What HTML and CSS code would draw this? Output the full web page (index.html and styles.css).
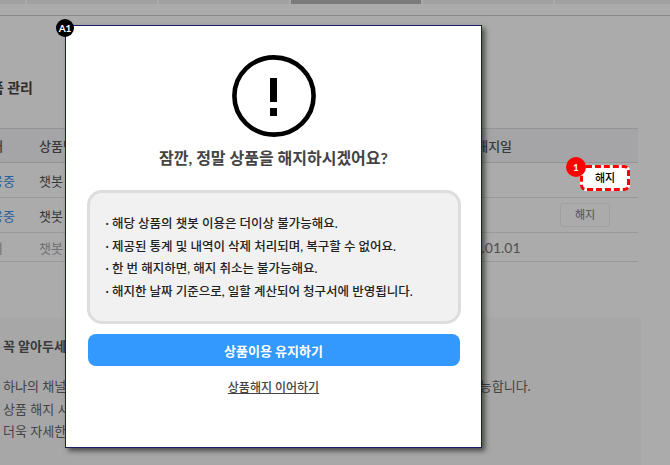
FILE: index.html
```html
<!DOCTYPE html>
<html lang="ko">
<head>
  <meta charset="UTF-8" />
  <meta name="viewport" content="width=device-width, initial-scale=1.0"/>
  <title>상품 해지</title>
  <link rel="stylesheet" href="styles.css">
</head>
<body>

<div class="tabs">
  <span class="tab tab-first"></span>
  <span class="tab"></span>
  <span class="tab"></span>
  <span class="tab tab-active"></span>
  <span class="tab"></span>
  <span class="tab tab-last"></span>
</div>

<main class="page">
  <h2 class="page-title">상품 관리</h2>

  <table class="product-table">
    <tr>
      <th class="col-state">상태</th>
      <th class="col-name">상품명</th>
      <th class="col-date">상품 해지일</th>
      <th class="col-btn"></th>
    </tr>
    <tr>
      <td class="state-on">이용중</td>
      <td>챗봇 상품</td>
      <td>-</td>
      <td class="col-btn"><span class="btn-cancel btn-hidden">해지</span></td>
    </tr>
    <tr>
      <td class="state-on">이용중</td>
      <td>챗봇 상품</td>
      <td>-</td>
      <td class="col-btn"><span class="btn-cancel">해지</span></td>
    </tr>
    <tr class="row-off">
      <td>해지</td>
      <td>챗봇 상품</td>
      <td>2022.01.01</td>
      <td></td>
    </tr>
  </table>

  <section class="notice">
    <h3>꼭 알아두세요!</h3>
    <p>하나의 채널에는 하나의 상품만 이용할 수 있으며, 이용 중인 상품을 해지한 후 재구매가 가능합니다.</p>
    <p>상품 해지 시 해지한 날짜 기준으로 요금이 계산됩니다.</p>
    <p>더욱 자세한 내용은 고객센터로 문의해 주세요.</p>
  </section>
</main>

<div class="overlay"></div>

<!-- highlighted button sits above the dim layer -->
<div class="highlight">
  <span class="step-badge">1</span>
  <span class="highlight-btn">해지</span>
</div>

<div class="modal">
  <span class="modal-badge">A1</span>
  <svg class="alert-icon" width="84" height="82" viewBox="0 0 84 82">
    <ellipse cx="42" cy="41" rx="39.6" ry="38.6" fill="none" stroke="#000" stroke-width="4.6"/>
    <rect x="38" y="23" width="7" height="24" fill="#000"/>
    <rect x="38" y="53" width="7" height="8" fill="#000"/>
  </svg>
  <h2 class="modal-title">잠깐, 정말 상품을 해지하시겠어요?</h2>
  <ul class="warn-box">
    <li>· 해당 상품의 챗봇 이용은 더이상 불가능해요.</li>
    <li>· 제공된 통계 및 내역이 삭제 처리되며, 복구할 수 없어요.</li>
    <li>· 한 번 해지하면, 해지 취소는 불가능해요.</li>
    <li>· 해지한 날짜 기준으로, 일할 계산되어 청구서에 반영됩니다.</li>
  </ul>
  <button class="keep-btn">상품이용 유지하기</button>
  <a class="cancel-link" href="#">상품해지 이어하기</a>
</div>

</body>
</html>
```

FILE: styles.css
```css
* {
  box-sizing: border-box;
}

html, body {
  height: 100%;
}

body {
  margin: 0;
  width: 670px;
  height: 465px;
  overflow: hidden;
  position: relative;
  font-family: Lato, "Noto Sans CJK KR", sans-serif;
  background: #fff;
  color: #333;
}

.tabs {
  display: flex;
  gap: 2px;
  height: 16px;
  padding-bottom: 11px;
  border-bottom: 1px solid #ccc;
}

.tab {
  width: 130px;
  background: #f0f0f0;
}

.tab-first {
  width: 25px;
}

.tab-last {
  flex: 1;
}

.tab-active {
  background: #b8b8b8;
}

.page {
  width: 664px;
  margin-left: -22px;
}

.page-title {
  margin: 62px 0 0;
  height: 50px;
  font-size: 14px;
  line-height: 20px;
  font-weight: 700;
  color: #444;
}

.product-table {
  width: 660px;
  height: 134px;
  border-collapse: collapse;
  font-size: 13px;
  color: #555;
}

.product-table th {
  height: 34px;
  background: #f7f7f9;
  border-top: 1px solid #ddd;
  border-bottom: 1px solid #ddd;
  font-weight: 500;
  text-align: left;
  color: #555;
}

.product-table td {
  border-bottom: 1px solid #e4e4e4;
}

.col-state {
  width: 60px;
}

.col-name {
  width: 410px;
}

.col-date {
  width: 110px;
}

.col-btn {
  width: 80px;
}

.state-on {
  color: #3b8fe8;
}

.row-off td {
  color: #aaa;
}

.row-off td:nth-child(3) {
  color: #777;
  font-size: 14px;
}

.btn-cancel {
  display: block;
  width: 50px;
  height: 24px;
  margin-left: 1px;
  font-size: 11px;
  line-height: 22px;
  text-align: center;
  border: 1px solid #eee;
  border-radius: 3px;
  color: #777;
}

.btn-hidden {
  visibility: hidden;
}

.notice {
  width: 663px;
  height: 150px;
  margin-top: 55px;
  padding: 18px 0 0 25px;
  background: #f9f9fb;
  font-size: 13px;
  color: #666;
}

.notice h3 {
  margin: 0 0 18px;
  font-size: 13px;
  line-height: 22px;
  font-weight: 700;
  color: #555;
}

.notice p {
  margin: 0;
  line-height: 22.5px;
}

.overlay {
  position: absolute;
  inset: 0;
  background: rgba(0, 0, 0, 0.33);
}

.highlight {
  position: absolute;
  left: 566px;
  top: 157px;
  width: 64px;
  height: 34px;
}

.highlight-btn {
  position: absolute;
  left: 14px;
  top: 8px;
  width: 50px;
  height: 26px;
  background: #fff;
  border: 3px dashed #f00;
  border-radius: 6px;
  font-size: 11px;
  font-weight: 500;
  line-height: 20px;
  text-align: center;
  color: #000;
}

.step-badge {
  position: absolute;
  left: 0;
  top: 0;
  z-index: 1;
  width: 20px;
  height: 20px;
  border-radius: 50%;
  background: #f00;
  color: #fff;
  font-size: 10px;
  font-weight: 700;
  line-height: 20px;
  text-align: center;
}

.modal {
  position: absolute;
  left: 65px;
  top: 25px;
  width: 417px;
  height: 423px;
  display: flex;
  flex-direction: column;
  align-items: center;
  padding-top: 29px;
  background: #fff;
  border: 1px solid #1c1c66;
  box-shadow: 3px 3px 5px rgba(0, 0, 0, 0.55);
}

.modal-badge {
  position: absolute;
  left: -10px;
  top: -7px;
  width: 18px;
  height: 18px;
  border-radius: 50%;
  background: #000;
  color: #fff;
  font-size: 10px;
  font-weight: 700;
  line-height: 18px;
  text-align: center;
}

.alert-icon {
  display: block;
  margin-left: 0;
}

.modal-title {
  margin: 9px 0 0;
  font-size: 16px;
  line-height: 24px;
  font-weight: 700;
  color: #444;
}

.warn-box {
  list-style: none;
  width: 374px;
  height: 134px;
  margin: 20px 0 0;
  padding: 20px 0 0 16px;
  background: #f1f1f1;
  border: 3px solid #ddd;
  border-radius: 15px;
  font-size: 12.5px;
  font-weight: 500;
  color: #222;
}

.warn-box li {
  line-height: 22.6px;
}

.keep-btn {
  width: 372px;
  height: 32px;
  margin-top: 10px;
  border: none;
  border-radius: 8px;
  background: #3399ff;
  color: #fff;
  font-family: inherit;
  font-size: 13px;
  font-weight: 700;
}

.cancel-link {
  margin-top: 13px;
  font-size: 12px;
  line-height: 18px;
  font-weight: 500;
  color: #444;
}
```
